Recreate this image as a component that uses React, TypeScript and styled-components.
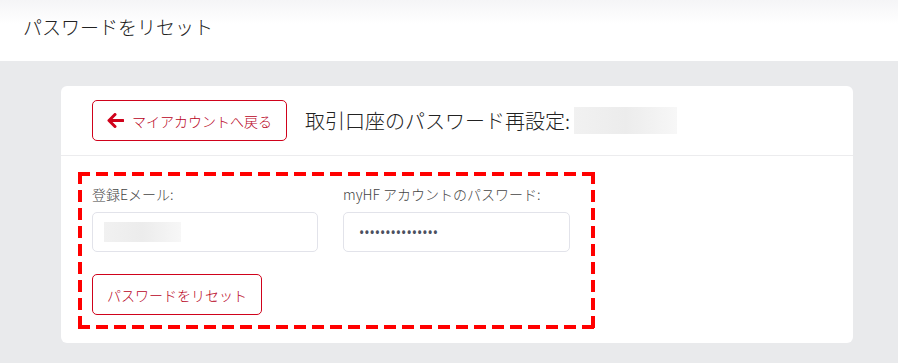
import React from "react";
import styled, { createGlobalStyle } from "styled-components";

const GlobalStyle = createGlobalStyle`
  html, body {
    margin: 0;
    padding: 0;
    background: #e9eaec;
    font-family: "Noto Sans", "Noto Sans CJK JP", sans-serif;
  }
`;

const ArrowIcon = () => (
  <svg width="17" height="15" viewBox="0 0 17 15" fill="none">
    <path
      d="M16 7.5H2.5M8 1.5L2 7.5l6 6"
      stroke="#d0021b"
      strokeWidth="3"
      strokeLinecap="round"
      strokeLinejoin="round"
    />
  </svg>
);

const App = () => {
  return (
    <>
      <GlobalStyle />
      <Header>
        <PageTitle>パスワードをリセット</PageTitle>
      </Header>
      <Main>
        <Card>
          <CardHeader>
            <OutlineButton type="button">
              <ArrowIcon />
              マイアカウントへ戻る
            </OutlineButton>
            <CardTitle>取引口座のパスワード再設定:</CardTitle>
            <Blur width={103} height={27} />
          </CardHeader>
          <CardBody>
            <FormBox>
              <Fields>
                <Field>
                  <Label>登録Eメール:</Label>
                  <InputWrap>
                    <Blur width={77} height={20} />
                  </InputWrap>
                </Field>
                <Field>
                  <Label>myHF アカウントのパスワード:</Label>
                  <Input type="password" defaultValue="passwordpasswor" />
                </Field>
              </Fields>
              <SubmitButton type="button">パスワードをリセット</SubmitButton>
            </FormBox>
          </CardBody>
        </Card>
      </Main>
    </>
  );
};

export default App;

const Header = styled.header`
  height: 61px;
  display: flex;
  align-items: center;
  padding: 0 23px;
  box-sizing: border-box;
  background: linear-gradient(#f5f5f7 0%, #ffffff 40%);
`;

const PageTitle = styled.h1`
  margin: 0 0 8px;
  font-size: 19px;
  font-weight: 300;
  color: #222;
  font-family: "Noto Sans CJK JP", sans-serif;
`;

const Main = styled.main`
  padding: 25px 45px 20px 61px;
`;

const Card = styled.section`
  background: #fff;
  border-radius: 6px;
`;

const CardHeader = styled.div`
  display: flex;
  align-items: center;
  padding: 14px 31px;
  border-bottom: 1px solid #ececee;
`;

const OutlineButton = styled.button`
  display: inline-flex;
  align-items: center;
  gap: 8px;
  height: 41px;
  padding: 0 14px;
  border: 1px solid #d0021b;
  border-radius: 5px;
  background: #fff;
  color: #b8001a;
  font-family: "Noto Sans CJK JP", sans-serif;
  font-size: 14px;
  font-weight: 300;
  cursor: pointer;
`;

const CardTitle = styled.h2`
  margin: 0 4px 0 18px;
  font-size: 20px;
  font-weight: 300;
  color: #222;
  font-family: "Noto Sans CJK JP", sans-serif;
`;

const Blur = styled.div<{ width: number; height: number }>`
  width: ${(p) => p.width}px;
  height: ${(p) => p.height}px;
  background: linear-gradient(90deg, #f1f1f1, #ececec 50%, #f7f7f7);
`;

const CardBody = styled.div`
  padding: 16px 17px 14px;
`;

const FormBox = styled.div`
  width: 517px;
  box-sizing: border-box;
  padding: 12px 25px 14px 14px;
  background-image:
    repeating-linear-gradient(90deg, #ff0000 0 12px, transparent 12px 18px),
    repeating-linear-gradient(90deg, #ff0000 0 12px, transparent 12px 18px),
    repeating-linear-gradient(180deg, #ff0000 0 12px, transparent 12px 18px),
    repeating-linear-gradient(180deg, #ff0000 0 12px, transparent 12px 18px);
  background-size: 100% 4px, 100% 4px, 4px 100%, 4px 100%;
  background-position: 0 0, 0 100%, 0 0, 100% 0;
  background-repeat: no-repeat;
`;

const Fields = styled.div`
  display: grid;
  grid-template-columns: 226px 227px;
  column-gap: 25px;
`;

const Field = styled.div`
  display: flex;
  flex-direction: column;
`;

const Label = styled.label`
  font-family: "Noto Sans CJK JP", sans-serif;
  font-size: 14px;
  font-weight: 300;
  line-height: 20px;
  color: #444;
  margin-bottom: 8px;
`;

const InputWrap = styled.div`
  height: 40px;
  box-sizing: border-box;
  border: 1px solid #e2e3ea;
  border-radius: 5px;
  display: flex;
  align-items: center;
  padding-left: 11px;
`;

const Input = styled.input`
  height: 40px;
  box-sizing: border-box;
  border: 1px solid #e2e3ea;
  border-radius: 5px;
  padding: 0 15px;
  font-size: 14px;
  color: #4b5060;
  font-family: "Noto Sans", sans-serif;
  outline: none;
`;

const SubmitButton = styled(OutlineButton)`
  margin-top: 22px;
  padding: 0 14px;
`;
